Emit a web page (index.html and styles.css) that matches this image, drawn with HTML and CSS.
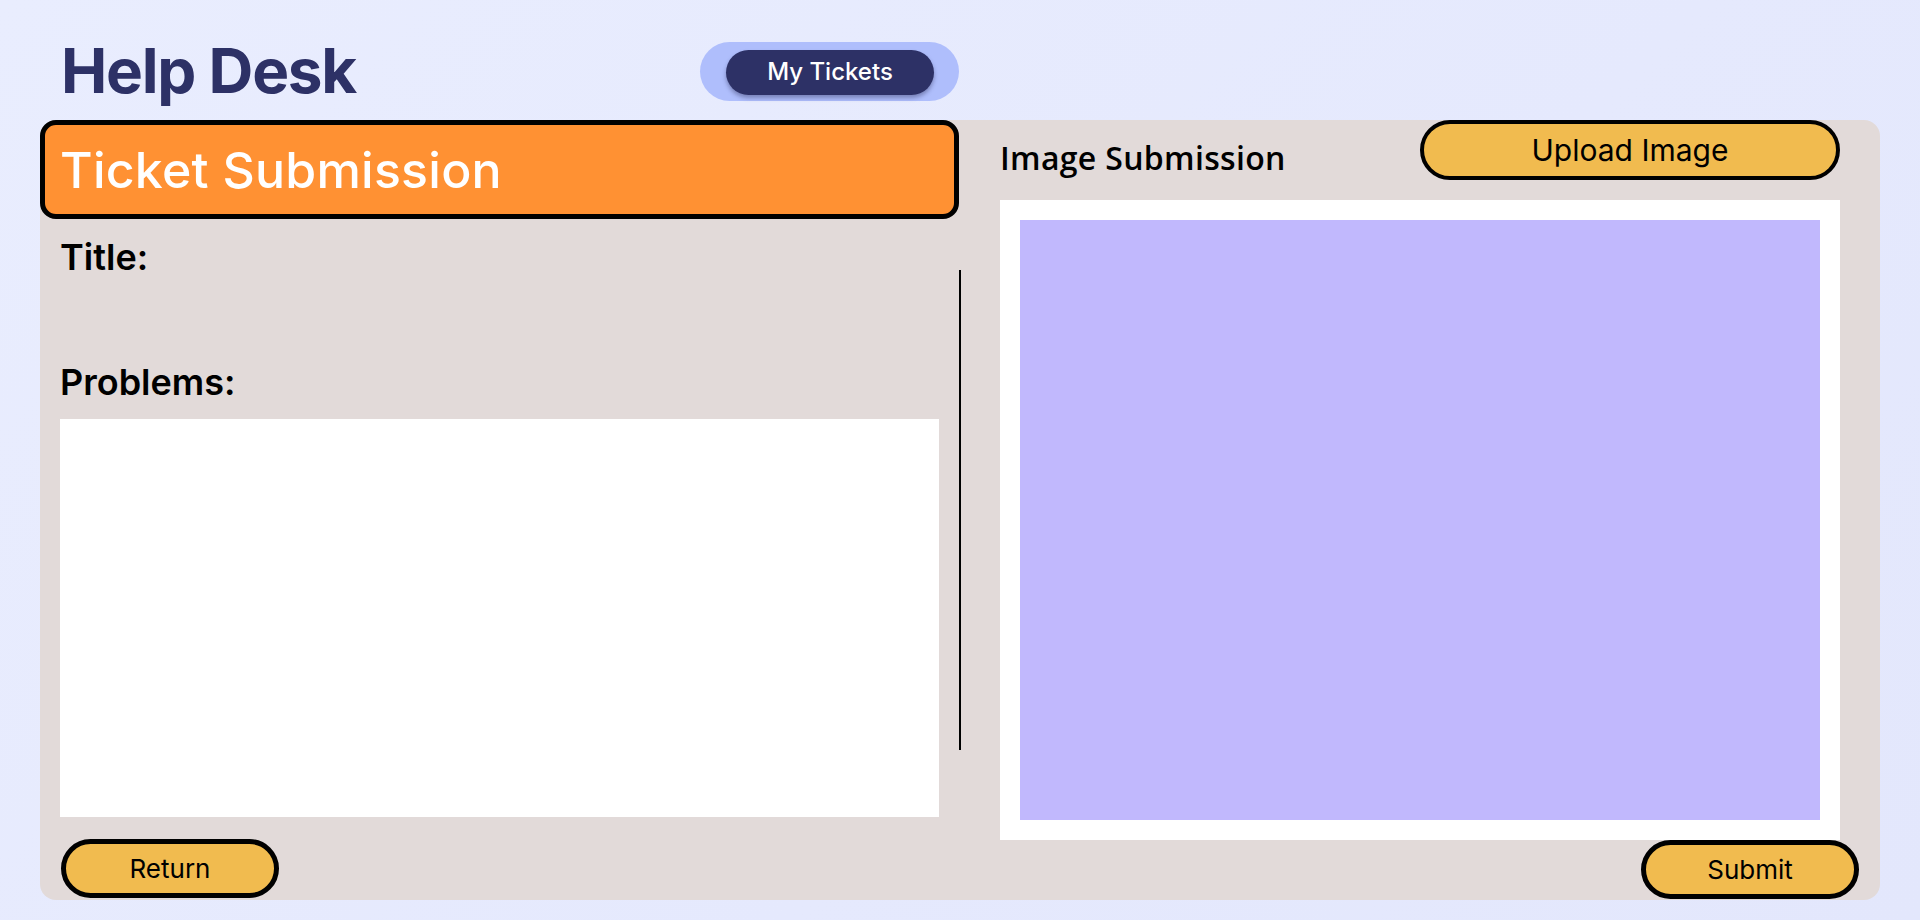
FILE: index.html
```html
<!DOCTYPE html>
<html lang="en">
<head>
<meta charset="utf-8">
<title>Help Desk</title>
<link rel="stylesheet" href="styles.css">
</head>
<body>
<header class="topbar">
  <h1 class="brand">Help Desk</h1>
  <nav class="nav-pill"><button class="nav-btn">My Tickets</button></nav>
</header>
<main class="panel">
  <section class="ticket">
    <div class="ticket-head"><h2 class="ticket-title">Ticket Submission</h2></div>
    <label class="field-label first" for="title">Title:</label>
    <input class="title-input" id="title" type="text">
    <label class="field-label" for="problems">Problems:</label>
    <textarea class="problems" id="problems"></textarea>
    <button class="pill-btn small return">Return</button>
  </section>
  <div class="divider"></div>
  <section class="image-side">
    <div class="image-head">
      <h2 class="image-title">Image Submission</h2>
      <button class="pill-btn upload">Upload Image</button>
    </div>
    <div class="image-frame"><div class="image-preview"></div></div>
    <div class="submit-row"><button class="pill-btn small submit">Submit</button></div>
  </section>
</main>
</body>
</html>
```

FILE: styles.css
```css
* { box-sizing: border-box; }

body {
  margin: 0;
  height: 920px;
  overflow: hidden;
  background: linear-gradient(135deg, #e9edfe 0%, #e5e9fd 60%, #e3e7fc 100%);
  font-family: Inter, "Noto Sans", sans-serif;
}

.topbar {
  display: grid;
  grid-template-columns: 639px auto;
  justify-content: start;
  align-items: center;
  height: 120px;
  padding: 40px 0 21px 61px;
}

.brand {
  margin: 0;
  font-size: 62px;
  font-weight: 700;
  line-height: 1;
  letter-spacing: -0.02em;
  color: #2d3166;
}

.nav-pill {
  width: 259px;
  height: 59px;
  border-radius: 30px;
  background: #afbefc;
  padding: 8px 25px 6px 26px;
}

.nav-btn {
  display: block;
  width: 208px;
  height: 45px;
  border: none;
  border-radius: 23px;
  background: #2d3166;
  color: #fff;
  font-family: Inter, sans-serif;
  font-size: 24px;
  font-weight: 500;
  line-height: 1;
  box-shadow: 0 3px 4px rgba(20, 20, 60, 0.35);
}

.panel {
  margin: 0 40px;
  height: 780px;
  background: #e2dad9;
  border-radius: 16px;
  display: grid;
  grid-template-columns: 919px 2px 1fr;
}

.ticket {
  display: flex;
  flex-direction: column;
  align-items: flex-start;
}

.ticket-head {
  width: 919px;
  height: 99px;
  border: 5px solid #000;
  border-radius: 16px;
  background: #ff9133;
  display: flex;
  align-items: center;
  padding-left: 15px;
}

.ticket-title {
  margin: 0;
  font-size: 50px;
  font-weight: 500;
  line-height: 1;
  letter-spacing: 0.005em;
  color: #fff;
}

.field-label {
  margin-left: 20px;
  font-size: 36px;
  font-weight: 600;
  line-height: 1;
  color: #000;
}

.field-label.first { margin-top: 20px; }

.title-input {
  width: 879px;
  height: 89px;
  margin-left: 20px;
  border: none;
  background: transparent;
  outline: none;
}

.problems {
  display: block;
  width: 879px;
  height: 398px;
  margin: 19px 0 0 20px;
  border: none;
  background: #fff;
  resize: none;
}

.pill-btn {
  display: block;
  border: 4px solid #000;
  border-radius: 32px;
  background: #f1bb4f;
  color: #000;
  font-family: Inter, sans-serif;
  font-weight: 400;
  line-height: 1;
  padding: 0;
}

.pill-btn.small {
  width: 218px;
  height: 59px;
  border-width: 5px;
  font-size: 26px;
}

.return {
  margin: 22px 0 0 21px;
}

.divider {
  width: 2px;
  height: 480px;
  margin-top: 150px;
  background: #000;
}

.image-side {
  padding-left: 39px;
  display: flex;
  flex-direction: column;
}

.image-head {
  height: 60px;
  margin-right: 40px;
  display: flex;
  justify-content: space-between;
  align-items: flex-start;
}

.image-title {
  margin: 22px 0 0 0;
  font-family: "Open Sans", sans-serif;
  font-size: 32px;
  font-weight: 600;
  line-height: 1;
  letter-spacing: 0.01em;
  color: #000;
}

.upload {
  width: 420px;
  height: 60px;
  font-size: 30px;
}

.image-frame {
  width: 840px;
  height: 640px;
  margin-top: 20px;
  border: 20px solid #fff;
  background: #c1b8fd;
}

.image-preview {
  width: 100%;
  height: 100%;
}

.submit-row {
  display: flex;
  justify-content: flex-end;
  margin-right: 21px;
}

.submit {
  height: 60px;
}
```
